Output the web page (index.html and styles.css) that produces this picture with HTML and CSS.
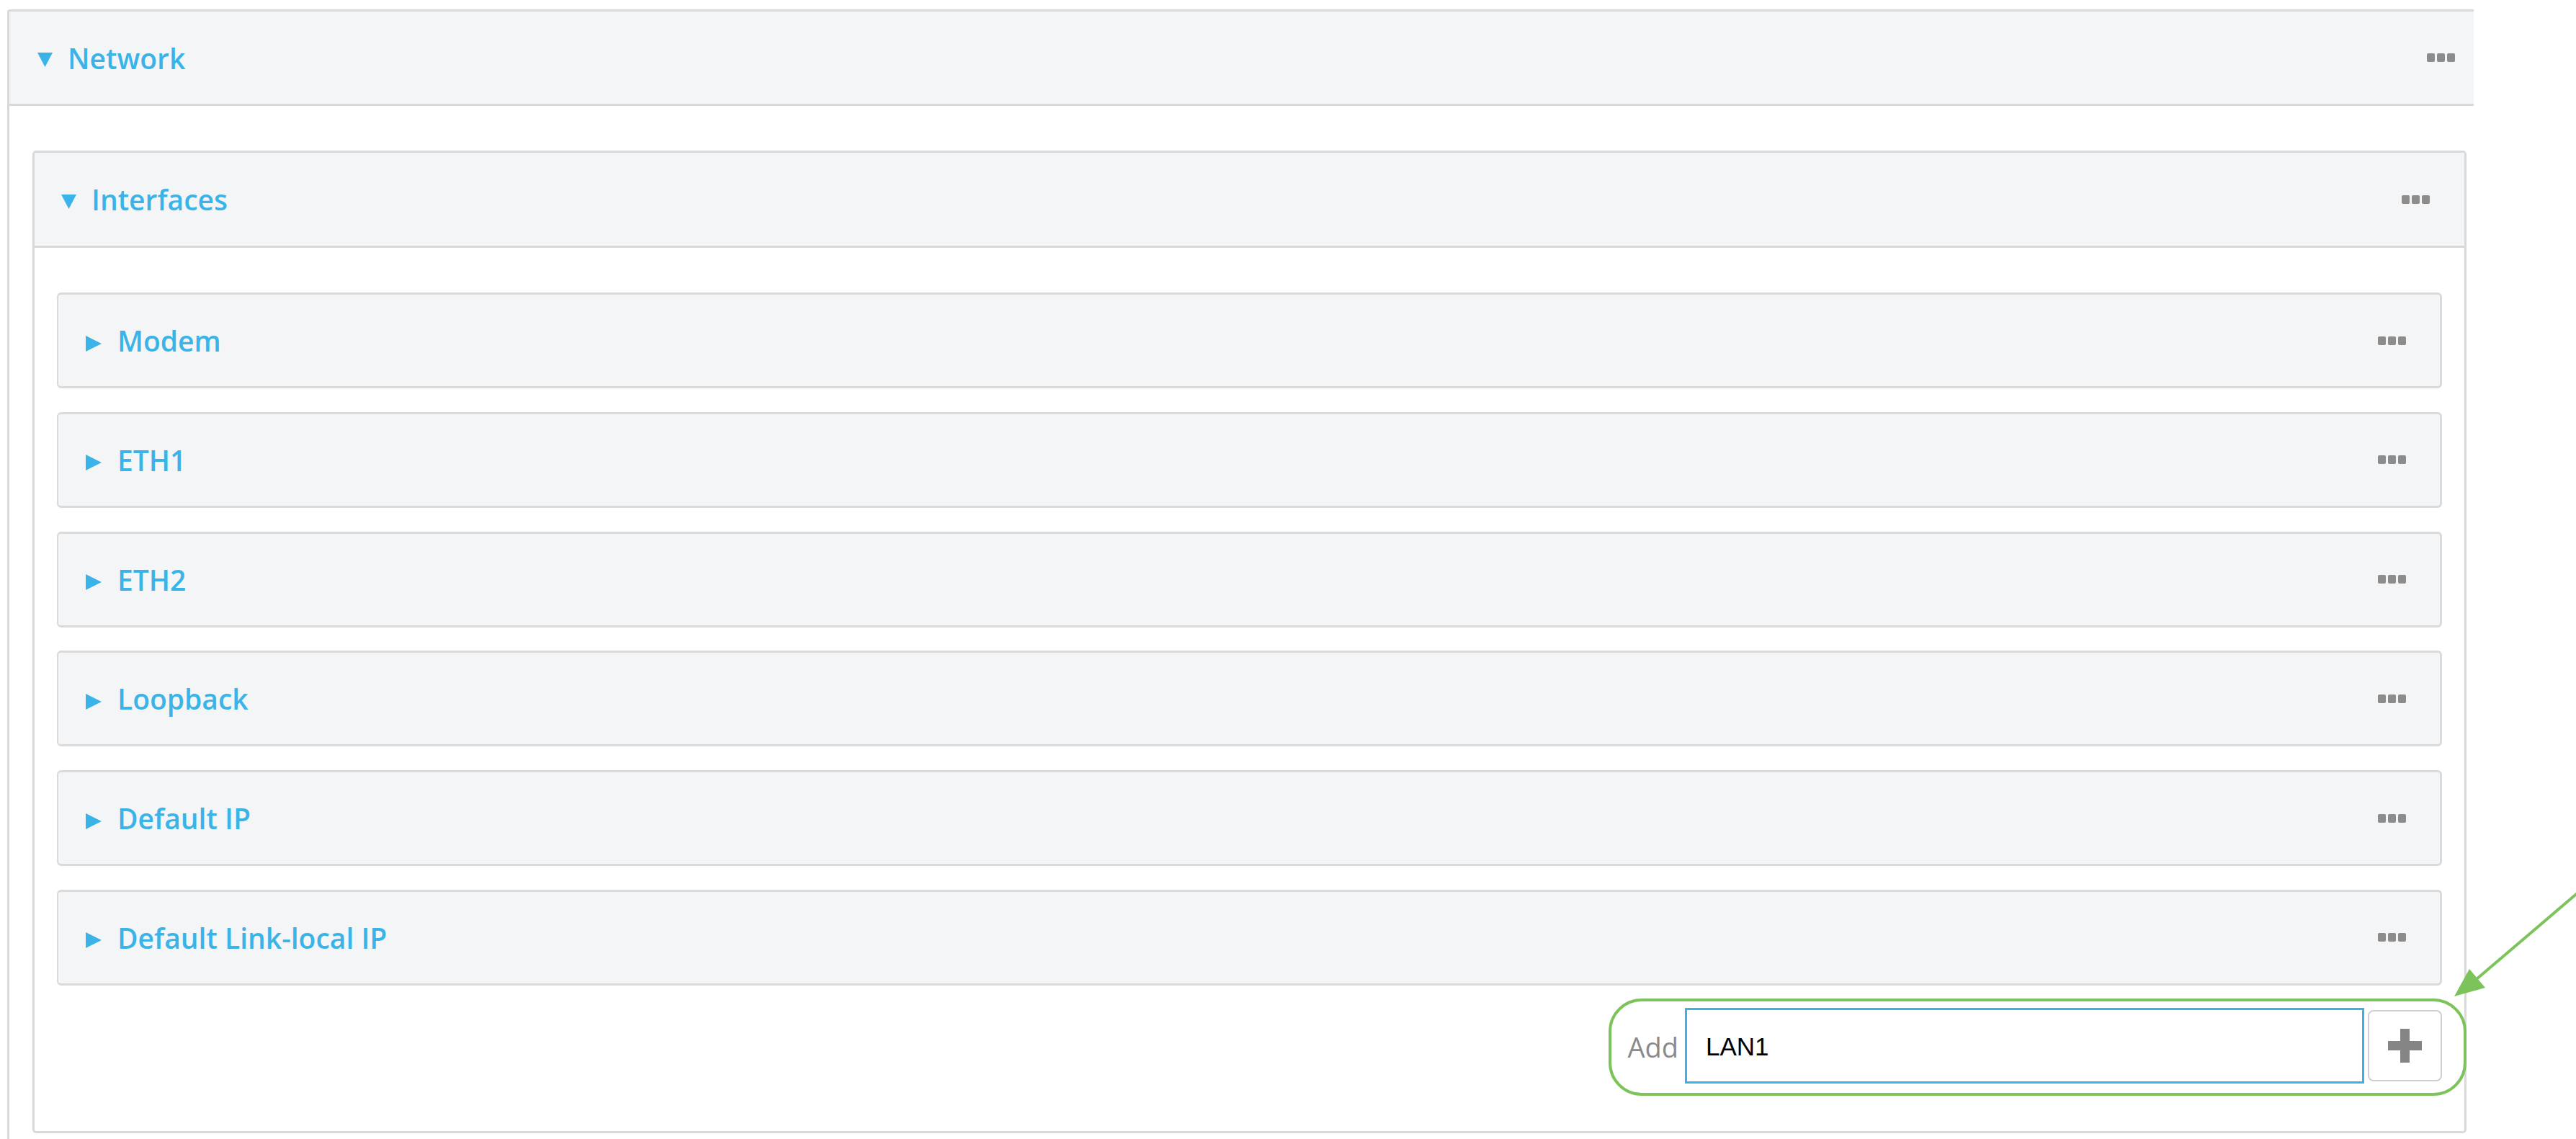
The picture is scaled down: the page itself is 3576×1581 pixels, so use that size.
FILE: index.html
```html
<!DOCTYPE html>
<html lang="en">
<head>
<meta charset="utf-8">
<title>Network</title>
<link rel="stylesheet" href="styles.css">
</head>
<body>
<div class="page">
  <section class="panel network">
    <header class="panel-head network-head">
      <svg class="tri-down" viewBox="0 0 21 20" width="21" height="20"><polygon points="0,0 21,0 10.5,20" fill="#3ab4e8"/></svg>
      <span class="title">Network</span>
      <span class="dots"><i></i><i></i><i></i></span>
    </header>
    <div class="network-body">
      <section class="panel interfaces">
        <header class="panel-head iface-head">
          <svg class="tri-down" viewBox="0 0 21 20" width="21" height="20"><polygon points="0,0 21,0 10.5,20" fill="#3ab4e8"/></svg>
          <span class="title">Interfaces</span>
          <span class="dots"><i></i><i></i><i></i></span>
        </header>
        <div class="iface-body">
          <div class="item">
            <svg class="tri-right" viewBox="0 0 22 22" width="22" height="22"><polygon points="0,0 22,11 0,22" fill="#3ab4e8"/></svg>
            <span class="title">Modem</span>
            <span class="dots"><i></i><i></i><i></i></span>
          </div>
          <div class="item">
            <svg class="tri-right" viewBox="0 0 22 22" width="22" height="22"><polygon points="0,0 22,11 0,22" fill="#3ab4e8"/></svg>
            <span class="title">ETH1</span>
            <span class="dots"><i></i><i></i><i></i></span>
          </div>
          <div class="item">
            <svg class="tri-right" viewBox="0 0 22 22" width="22" height="22"><polygon points="0,0 22,11 0,22" fill="#3ab4e8"/></svg>
            <span class="title">ETH2</span>
            <span class="dots"><i></i><i></i><i></i></span>
          </div>
          <div class="item">
            <svg class="tri-right" viewBox="0 0 22 22" width="22" height="22"><polygon points="0,0 22,11 0,22" fill="#3ab4e8"/></svg>
            <span class="title">Loopback</span>
            <span class="dots"><i></i><i></i><i></i></span>
          </div>
          <div class="item">
            <svg class="tri-right" viewBox="0 0 22 22" width="22" height="22"><polygon points="0,0 22,11 0,22" fill="#3ab4e8"/></svg>
            <span class="title">Default IP</span>
            <span class="dots"><i></i><i></i><i></i></span>
          </div>
          <div class="item">
            <svg class="tri-right" viewBox="0 0 22 22" width="22" height="22"><polygon points="0,0 22,11 0,22" fill="#3ab4e8"/></svg>
            <span class="title">Default Link-local IP</span>
            <span class="dots"><i></i><i></i><i></i></span>
          </div>
          <div class="add-row">
            <span class="add-label">Add</span>
            <div class="add-input">LAN1</div>
            <div class="add-btn">
              <svg viewBox="0 0 47 47" width="47" height="47"><rect x="17" y="0" width="13" height="47" fill="#858585"/><rect x="0" y="17" width="47" height="13" fill="#858585"/></svg>
            </div>
            <div class="highlight"></div>
          </div>
        </div>
      </section>
    </div>
  </section>
</div>
<svg class="arrow" viewBox="0 0 196 220" width="196" height="220">
  <line x1="200" y1="58" x2="58" y2="179" stroke="#7dc35b" stroke-width="4"/>
  <polygon points="48,165 70,191 27,203" fill="#7dc35b"/>
</svg>
</body>
</html>
```

FILE: styles.css
```css
html, body {
  margin: 0;
  padding: 0;
  overflow: hidden;
  background: #ffffff;
}
body {
  font-family: "Open Sans", "Noto Sans", sans-serif;
  position: relative;
  width: 3576px;
  height: 1581px;
}
.page {
  padding: 13px 0 0 10px;
}
.panel {
  box-sizing: border-box;
  background: #ffffff;
}
.network {
  width: 3424px;
  border-top: 3px solid #d9d9d9;
  border-left: 3px solid #d9d9d9;
  border-top-left-radius: 4px;
  min-height: 1600px;
}
.panel-head {
  display: flex;
  align-items: center;
  background: #f4f5f7;
  border-bottom: 3px solid #d9d9d9;
  box-sizing: border-box;
}
.network-head {
  height: 131px;
  padding: 0 26px 0 39px;
  border-top-left-radius: 2px;
}
.title {
  font-size: 39px;
  font-weight: 600;
  color: #3ab4e8;
  line-height: 1;
}
.tri-down {
  margin-right: 21px;
  margin-top: 6px;
  flex: none;
}
.tri-right {
  margin-right: 22px;
  margin-top: 8px;
  flex: none;
}
.dots {
  margin-left: auto;
  display: flex;
  gap: 3px;
}
.dots i {
  display: block;
  width: 11px;
  height: 12px;
  background: #8c8c8c;
  border-radius: 2px;
}
.network-body {
  padding: 62px 10px 40px 32px;
}
.interfaces {
  border: 3px solid #d9d9d9;
  border-radius: 5px;
  width: 3379px;
  height: 1364px;
}
.iface-head {
  height: 132px;
  padding: 0 48px 0 37px;
  border-top-left-radius: 3px;
  border-top-right-radius: 3px;
}
.iface-body {
  padding: 62px 31px 0 31px;
  display: flex;
  flex-direction: column;
  gap: 32.8px;
}
.item {
  box-sizing: border-box;
  height: 133px;
  background: #f4f5f7;
  border: 3px solid #dadada;
  border-left-width: 2px;
  border-right-width: 3px;
  border-radius: 6px;
  display: flex;
  align-items: center;
  padding: 0 47px 0 38px;
}
.add-row {
  position: relative;
  display: flex;
  justify-content: flex-end;
  align-items: center;
  margin-top: -2px;
  height: 105px;
}
.add-label {
  font-size: 38px;
  color: #8a8a8a;
  margin-right: 9px;
  margin-top: 4px;
}
.add-input {
  box-sizing: border-box;
  width: 943px;
  height: 105px;
  border: 3px solid #3cb1e3;
  background: #ffffff;
  font-family: "Liberation Sans", Arial, sans-serif;
  font-size: 35px;
  color: #000000;
  display: flex;
  align-items: center;
  padding: 4px 0 0 26px;
}
.add-btn {
  box-sizing: border-box;
  width: 103px;
  height: 99px;
  margin-left: 5px;
  border: 2px solid #cfcfcf;
  border-radius: 8px;
  background: #ffffff;
  display: flex;
  align-items: center;
  justify-content: center;
}
.highlight {
  position: absolute;
  right: -34px;
  top: -13px;
  width: 1191px;
  height: 135px;
  box-sizing: border-box;
  border: 4px solid #7dc35b;
  border-radius: 46px;
  pointer-events: none;
}
.arrow {
  position: absolute;
  left: 3380px;
  top: 1180px;
}
```
